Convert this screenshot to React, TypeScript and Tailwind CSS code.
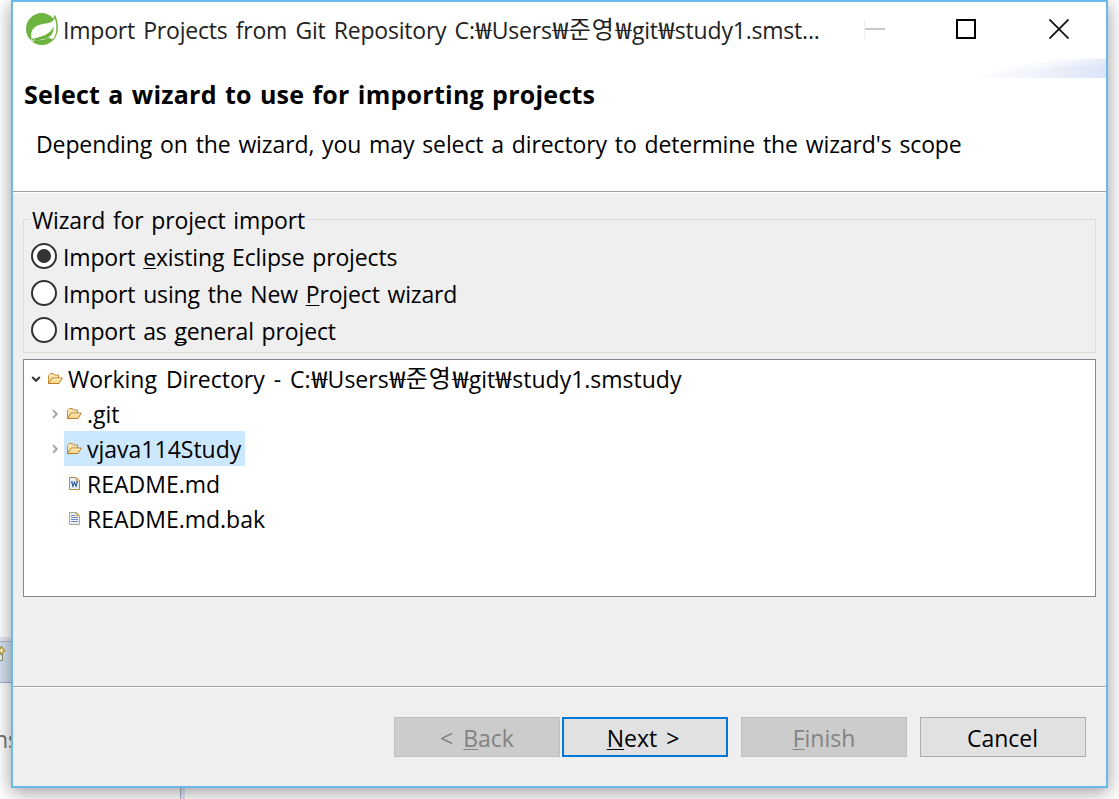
import React from "react";

function SpringLogo() {
  return (
    <svg className="h-[32px] w-[32px] shrink-0" viewBox="0 0 32 32">
      <path fill="#6db33f" d="M29 2C28.400 3.600 27.800 4.600 27 5.400 24 2 20 0 16 0 7 0 0 7 0 16c0 5 2 8.500 5.200 11.500C8 30.500 12 32 16 32c5 0 9-2 11.800-5.500C31.500 22 33.500 13 29 2z" />
      <path fill="#fff" d="M28.800 5C26 11.500 20 9.600 13 12 7 14 4.500 18.500 5.200 24.400L8 27.300C13 28 18 27.300 22 24.800l5.200 1.400C31 21.500 31.500 13 28.800 5z" />
      <path fill="#6db33f" d="M27.600 13.500C25 20 17 24.200 7.600 25.200L5.500 26.500 9 30l8 1.500 9.500-4.500-4.500-1.600c-3.500 2-8 2.400-12.500 1.600 8 .2 15-2.300 17-7 .9-2 1.300-4.200 1.100-6.500z" />
      <path fill="none" stroke="#6db33f" strokeWidth=".9" d="M28.900 2.500c3.500 9 3.200 18-1.300 23.700" />
      <circle cx="7" cy="26.600" r="1.500" fill="#6db33f" stroke="#fff" strokeWidth=".7" />
    </svg>
  );
}

function FolderIcon() {
  return (
    <svg className="h-[16px] w-[16px] shrink-0" viewBox="0 0 16 16">
      <path fill="#fbe7b4" stroke="#c58a36" d="M1.500 12.500v-8l1-1 .8-1h3l1 1.500h4.200v3" />
      <path fill="#fbdc94" stroke="#bd7d2c" d="M1.500 12.500 5 7h10.300L12 12.500z" strokeLinejoin="round" />
      <path stroke="#fff3cf" d="M5.500 8.200h8.300" />
    </svg>
  );
}

function FileIcon({ word = false }: { word?: boolean }) {
  return (
    <svg className="h-[16px] w-[13px] shrink-0" viewBox="0 0 13 16">
      <path fill="#eaf1fb" stroke={word ? "#a58f4d" : "#a5a98f"} d="M1.500 1.500h6.800l3.200 3.200v8.800h-10z" />
      <path fill="#e8c77c" stroke="#bd9c55" strokeWidth=".7" d="M8 1.500v3.300h3.300z" />
      {word ? (
        <path fill="none" stroke="#2d5591" strokeWidth="1.100" d="m3.700 6 1.200 4.300L6.500 6.300l1.600 4L9.300 6M3 5.800h2M8.300 5.800h1.900" />
      ) : (
        <path stroke="#6f88c2" d="M3 4.500h4M3 6.500h7M3 8.500h7M3 10.500h7" />
      )}
    </svg>
  );
}

function Chevron({ open = false }: { open?: boolean }) {
  return (
    <svg className="h-[10px] w-[10px] shrink-0" viewBox="0 0 10 10">
      <path
        fill="none"
        stroke={open ? "#333" : "#a2a2a2"}
        strokeWidth={open ? 2 : 1.800}
        d={open ? "M1.200 3 5 6.800 8.800 3" : "M3 1.200 6.800 5 3 8.800"}
      />
    </svg>
  );
}

function Radio({ checked = false, children }: { checked?: boolean; children: React.ReactNode }) {
  return (
    <label className="flex h-[37px] items-center">
      <span className="mt-[-4px] flex h-[26px] w-[26px] shrink-0 items-center justify-center rounded-full border-2 border-[#333] bg-white">
        {checked && <span className="h-[14px] w-[14px] rounded-full bg-[#333]" />}
      </span>
      <span className="mt-[-2px] ml-[6px]">{children}</span>
    </label>
  );
}

const U = ({ children }: { children: React.ReactNode }) => (
  <span className="underline decoration-1 underline-offset-[2px] [text-decoration-skip-ink:none]">{children}</span>
);

const Won = () => (
  <span className="inline-block w-[17px] text-center leading-none">
    <span className="inline-block scale-x-[1.25]">₩</span>
  </span>
);

const RepoPath = ({ tail }: { tail: string }) => (
  <>
    C:<Won />Users<Won />
    <span className="inline-block -translate-y-[1px] text-[24px] leading-none tracking-[1px]">준영</span>
    <Won />git<Won />{tail}
  </>
);

export default function App() {
  return (
    <div className="relative h-[799px] w-[1119px] overflow-hidden bg-white font-['Open_Sans','Noto_Sans_CJK_KR',sans-serif] text-[23px] leading-[34px] whitespace-nowrap text-black">
      <div className="absolute top-[637px] left-0 h-[46px] w-[20px] border-b border-[#a9b2cb] bg-[#d3e2f1]">
        <div className="h-[5px] border-b border-[#b4bad0] bg-[#e4e8f4]" />
        <svg className="mt-[4px] h-[20px] w-[6px]" viewBox="0 0 6 20">
          <path fill="#eef4fa" stroke="#8d8d6c" d="M-2 8.500h4.500v6H-2z" />
          <path fill="#fff5cc" stroke="#b8902a" strokeWidth="1.100" d="M1.500.5 3 3l2 1.500L3 6 1.500 8.500 0 6l-2-1.500L0 3z" />
        </svg>
      </div>
      <div className="absolute top-[722px] left-[-6px] text-[#777]">ns</div>
      <div className="absolute top-[788px] left-[180px] h-[11px] w-[5px] border-l border-[#aab0c8] bg-[#dfe6f5]" />

      <main className="relative ml-[11px] flex h-[788px] w-[1097px] flex-col border-2 border-[#69b9ec] bg-[#efefef] shadow-[0_4px_18px_rgba(0,0,0,0.4)]">
        <header className="relative h-[190px] shrink-0 border-b border-[#a0a0a0] bg-white shadow-[0_1px_0_#fff]">
          <svg className="absolute top-[56px] right-0 h-[20px] w-[140px]" viewBox="0 0 140 20">
            <defs>
              <linearGradient id="swoosh">
                <stop offset="0" stopColor="#fff" />
                <stop offset=".5" stopColor="#f1f4fc" />
                <stop offset="1" stopColor="#dbe4f7" />
              </linearGradient>
            </defs>
            <path fill="url(#swoosh)" opacity=".5" d="M0 20Q60 1 140 0v20z" />
            <path fill="url(#swoosh)" opacity=".6" d="M50 14Q95 2 140 1v19H50z" />
            <path fill="url(#swoosh)" d="M0 20Q60 8 140 7v13z" />
          </svg>
          <div className="flex h-[54px] items-center pl-[13px]">
            <SpringLogo />
            <h1 className="ml-[5px] w-[801px] pt-[2px] tracking-[-0.2px] text-[#222] [word-spacing:2.400px]">
              Import Projects from Git Repository <RepoPath tail="study1.smst..." />
            </h1>
            <svg className="h-[22px] w-[22px]" viewBox="0 0 22 22">
              <path stroke="#eee" d="M.5 1v20" />
              <path stroke="#c8c8c8" strokeWidth="2" d="M1 11h20" />
            </svg>
            <svg className="ml-[70px] h-[20px] w-[20px]" viewBox="0 0 20 20">
              <path fill="none" stroke="#000" strokeWidth="2" d="M1 1h18v18H1z" />
            </svg>
            <svg className="ml-[73px] h-[20px] w-[20px]" viewBox="0 0 20 20">
              <path stroke="#111" strokeWidth="1.800" d="m.5.5 19 19m0-19-19 19" />
            </svg>
          </div>
          <h2 className="mt-[21px] ml-[11px] text-[25px] font-bold tracking-[0.250px] [word-spacing:1.400px]">Select a wizard to use for importing projects</h2>
          <p className="mt-[16px] ml-[23px] tracking-[-0.11px] [word-spacing:2px]">
            Depending on the wizard, you may select a directory to determine the wizard's scope
          </p>
        </header>

        <section className="mt-[27px] mr-[10px] ml-[10px] h-[134px] shrink-0 border border-[#dcdcdc] pl-[7px] tracking-[-0.15px] [word-spacing:2px]">
          <h3 className="mt-[-17px] ml-[-1px] w-fit bg-[#efefef] pr-[2px] pl-[2px]">Wizard for project import</h3>
          <div className="mt-[2px]">
            <Radio checked>Import <U>e</U>xisting Eclipse projects</Radio>
            <Radio>Import using the New <U>P</U>roject wizard</Radio>
            <Radio>Import as <U>g</U>eneral project</Radio>
          </div>
        </section>

        <section className="mx-[10px] mt-[6px] h-[238px] shrink-0 border border-[#828790] bg-white pt-[1px]">
          <div className="flex h-[35px] items-center pl-[7px]">
            <Chevron open />
            <span className="w-[6px]" />
            <FolderIcon />
            <span className="ml-[5px] [word-spacing:3px]">Working Directory - <RepoPath tail="study1.smstudy" /></span>
          </div>
          <div className="flex h-[35px] items-center pl-[26px]">
            <Chevron />
            <span className="w-[6px]" />
            <FolderIcon />
            <span className="ml-[5px]">.git</span>
          </div>
          <div className="flex h-[35px] items-center pl-[26px]">
            <Chevron />
            <span className="ml-[4px] flex h-[35px] w-[181px] items-center bg-[#cce8ff] pl-[2px]">
              <FolderIcon />
              <span className="ml-[5px]">vjava114Study</span>
            </span>
          </div>
          <div className="flex h-[35px] items-center pl-[44px]">
            <FileIcon word />
            <span className="ml-[6px]">README.md</span>
          </div>
          <div className="flex h-[35px] items-center pl-[44px]">
            <FileIcon />
            <span className="ml-[6px]">README.md.bak</span>
          </div>
        </section>

        <footer className="mt-[89px] flex flex-1 items-start border-t border-[#a0a0a0] pt-[30px] pr-[20px] shadow-[inset_0_1px_0_#fff]">
          <div className="ml-auto flex">
            <button className="h-[40px] w-[166px] border border-[#bfbfbf] bg-[#ccc] pt-[2px] text-[#838383] [word-spacing:4px]">&lt; <U>B</U>ack</button>
            <button className="ml-[2px] h-[40px] w-[166px] border-2 border-[#0078d7] bg-[#e1e1e1] pt-[2px] pr-[4px] [word-spacing:3px]"><U>N</U>ext &gt;</button>
            <button className="ml-[13px] h-[40px] w-[166px] border border-[#bfbfbf] bg-[#ccc] pt-[2px] text-[#838383]"><U>F</U>inish</button>
            <button className="ml-[13px] h-[40px] w-[166px] border border-[#adadad] bg-[#e1e1e1] pt-[2px] pr-[1px]">Cancel</button>
          </div>
        </footer>
      </main>
    </div>
  );
}
